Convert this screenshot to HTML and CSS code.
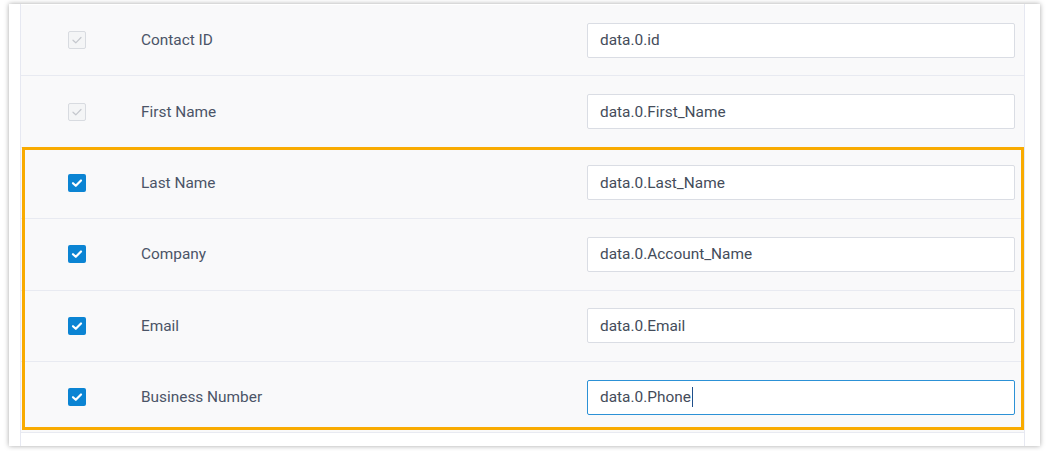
FILE: index.html
```html
<!DOCTYPE html>
<html>
<head>
<meta charset="utf-8">
<link rel="stylesheet" href="styles.css">
</head>
<body>
<div class="card">
  <div class="table">
    <div class="row">
      <div class="cell-check"><span class="cb cb-disabled"><svg viewBox="0 0 18 18"><path d="M5 9.2l2.8 2.6L13 6.5" /></svg></span></div>
      <div class="cell-label">Contact ID</div>
      <div class="cell-input"><div class="input">data.0.id</div></div>
    </div>
    <div class="row">
      <div class="cell-check"><span class="cb cb-disabled"><svg viewBox="0 0 18 18"><path d="M5 9.2l2.8 2.6L13 6.5" /></svg></span></div>
      <div class="cell-label">First Name</div>
      <div class="cell-input"><div class="input">data.0.First_Name</div></div>
    </div>
    <div class="group">
      <div class="row">
        <div class="cell-check"><span class="cb cb-on"><svg viewBox="0 0 18 18"><path d="M5 9.2l2.8 2.6L13 6.5" /></svg></span></div>
        <div class="cell-label">Last Name</div>
        <div class="cell-input"><div class="input">data.0.Last_Name</div></div>
      </div>
      <div class="row">
        <div class="cell-check"><span class="cb cb-on"><svg viewBox="0 0 18 18"><path d="M5 9.2l2.8 2.6L13 6.5" /></svg></span></div>
        <div class="cell-label">Company</div>
        <div class="cell-input"><div class="input">data.0.Account_Name</div></div>
      </div>
      <div class="row">
        <div class="cell-check"><span class="cb cb-on"><svg viewBox="0 0 18 18"><path d="M5 9.2l2.8 2.6L13 6.5" /></svg></span></div>
        <div class="cell-label">Email</div>
        <div class="cell-input"><div class="input">data.0.Email</div></div>
      </div>
      <div class="row">
        <div class="cell-check"><span class="cb cb-on"><svg viewBox="0 0 18 18"><path d="M5 9.2l2.8 2.6L13 6.5" /></svg></span></div>
        <div class="cell-label">Business Number</div>
        <div class="cell-input"><div class="input input-focus">data.0.Phone<span class="caret"></span></div></div>
      </div>
    </div>
  </div>
</div>
</body>
</html>
```

FILE: styles.css
```css
html, body {
  margin: 0;
  padding: 0;
  background: #ffffff;
}

body {
  padding: 4px 10px 5px 9px;
  font-family: Roboto, "Liberation Sans", Arial, sans-serif;
}

.card {
  width: 1031px;
  height: 442px;
  box-sizing: border-box;
  background: #ffffff;
  box-shadow: 0 0 5px rgba(0, 0, 0, 0.35);
  padding: 1px 15px 0 11px;
  overflow: hidden;
}

.table {
  height: 100%;
  border-left: 1px solid #e6e8f1;
  border-right: 1px solid #e6e8f1;
  margin-top: -1px;
  padding-top: 1px;
}

.row {
  display: flex;
  align-items: center;
  height: 70.4px;
  background: #f9f9fa;
  border-bottom: 1px solid #e8eaf1;
  padding: 0 9px 0 47px;
}

.group {
  position: relative;
}

.group::after {
  content: "";
  position: absolute;
  top: -1px;
  left: 1px;
  right: 0;
  bottom: 3px;
  border: 3px solid #f9ab00;
  pointer-events: none;
}

.cell-check {
  width: 73px;
  flex: none;
  display: flex;
  align-items: center;
}

.cb {
  width: 18px;
  height: 18px;
  box-sizing: border-box;
  border-radius: 2px;
  display: block;
}

.cb svg {
  display: block;
  width: 100%;
  height: 100%;
  fill: none;
  stroke-linecap: round;
  stroke-linejoin: round;
}

.cb-disabled {
  background: #f4f5f6;
  border: 1px solid #d8dbe0;
}

.cb-disabled svg {
  margin: -1px;
  width: 18px;
  height: 18px;
  stroke: #c4c7cd;
  stroke-width: 1.2;
}

.cb-on {
  background: #0b84d3;
}

.cb-on svg {
  stroke: #ffffff;
  stroke-width: 2.2;
}

.cell-label {
  flex: 1;
  font-size: 15.4px;
  color: #4b5467;
}

.cell-input {
  width: 428px;
  flex: none;
}

.input {
  height: 35px;
  box-sizing: border-box;
  border: 1px solid #dadde4;
  border-radius: 2px;
  background: #ffffff;
  padding: 0 12px;
  display: flex;
  align-items: center;
  font-size: 15.4px;
  color: #444c5a;
}

.input-focus {
  border-color: #2c91d6;
}

.caret {
  display: inline-block;
  width: 1px;
  height: 20px;
  background: #1f4f8a;
  margin-left: 1px;
}
```
